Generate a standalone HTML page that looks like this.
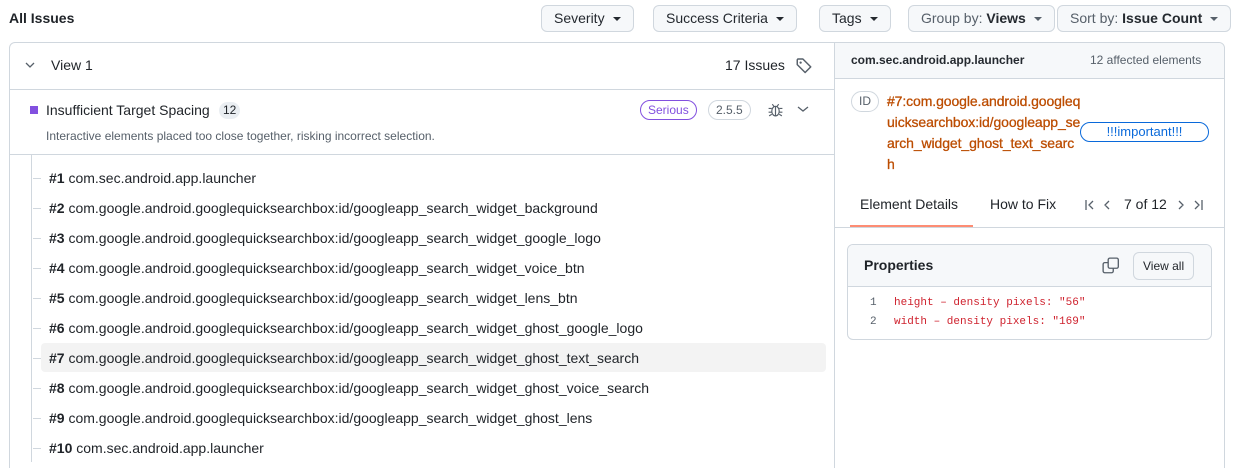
<!DOCTYPE html>
<html style="overflow:hidden;height:468px"><head><style>
*{box-sizing:border-box;margin:0;padding:0}
body{width:1239px;height:468px;overflow:hidden;background:#fff;font-family:"Liberation Sans",sans-serif;color:#1f2328;position:relative;font-size:14px}
.a{position:absolute;white-space:nowrap}
.btn{position:absolute;top:5px;height:27px;border:1px solid #d0d7de;border-radius:6px;background:#f6f8fa;font-size:14px;line-height:25px;padding:0 12px;color:#24292f;white-space:nowrap}
.btn .c{display:inline-block;width:0;height:0;border-left:4px solid transparent;border-right:4px solid transparent;border-top:4px solid #24292f;margin-left:8px;vertical-align:middle}
.row{position:absolute;left:41px;height:30px;width:785px;line-height:30px;padding-left:8px;font-size:14px;color:#1f2328}
.row b{font-weight:bold}
.tick{position:absolute;left:33px;width:8px;height:1px;background:#d0d7de}
</style></head><body>
<div class="a" style="left:9px;top:10px;font-size:14px;font-weight:bold">All Issues</div>
<div class="btn" style="left:541px">Severity<span class="c"></span></div>
<div class="btn" style="left:653px">Success Criteria<span class="c"></span></div>
<div class="btn" style="left:819px">Tags<span class="c"></span></div>
<div class="btn" style="left:908px;color:#57606a">Group by: <b style="color:#24292f">Views</b><span class="c" style="border-top-color:#57606a"></span></div>
<div class="btn" style="left:1057px;color:#57606a">Sort by: <b style="color:#24292f">Issue Count</b><span class="c" style="border-top-color:#57606a"></span></div>

<div class="a" style="left:9px;top:42px;width:1216px;height:440px;border:1px solid #d0d7de;border-radius:6px"></div>
<div class="a" style="left:834px;top:43px;width:1px;height:430px;background:#d0d7de"></div>
<div class="a" style="left:10px;top:89px;width:824px;height:1px;background:#d0d7de"></div>
<div class="a" style="left:10px;top:154px;width:824px;height:1px;background:#d0d7de"></div>

<svg class="a" style="left:25px;top:61px" width="10" height="8"><path d="M1 2l4 4 4-4" fill="none" stroke="#57606a" stroke-width="1.3"/></svg>
<div class="a" style="left:51px;top:57px;font-size:14px">View 1</div>
<div class="a" style="left:725px;top:57px;font-size:14px">17 Issues</div>
<svg class="a" style="left:795px;top:57px" width="18" height="18" viewBox="0 0 16 16"><path d="M2 2.5v4.3l7 7 5-5-7-7H2.5z" fill="none" stroke="#57606a" stroke-width="1.3" stroke-linejoin="round"/><circle cx="5" cy="5" r="1" fill="#57606a"/></svg>

<div class="a" style="left:30px;top:106px;width:8px;height:8px;background:#8250df"></div>
<div class="a" style="left:46px;top:102px;font-size:14px">Insufficient Target Spacing</div>
<div class="a" style="left:219px;top:102px;height:17px;padding:0 4px;border-radius:9px;background:#eaeef2;font-size:12px;line-height:17px">12</div>
<div class="a" style="left:46px;top:129px;font-size:12px;color:#57606a">Interactive elements placed too close together, risking incorrect selection.</div>
<div class="a" style="left:640px;top:100px;height:20px;padding:0 7px;border:1px solid #8250df;border-radius:10px;color:#8250df;font-size:12px;line-height:18px">Serious</div>
<div class="a" style="left:708px;top:100px;height:20px;padding:0 7px;border:1px solid #d0d7de;border-radius:10px;color:#57606a;font-size:12px;line-height:18px">2.5.5</div>
<svg class="a" style="left:767px;top:101px" width="17" height="17" viewBox="0 0 16 16" fill="none" stroke="#57606a" stroke-width="1.1"><ellipse cx="8" cy="9.5" rx="3.5" ry="4.5"/><path d="M8 5v9M5 3l1.5 2M11 3l-1.5 2M1.5 7h3M11.5 7h3M1.5 10.5h3M11.5 10.5h3M2 14l2.5-1.5M14 14l-2.5-1.5"/></svg>
<svg class="a" style="left:797px;top:105px" width="12" height="8"><path d="M1 2l5 4 5-4" fill="none" stroke="#57606a" stroke-width="1.3"/></svg>

<div class="a" style="left:31px;top:155px;width:1px;height:307px;background:#d0d7de"></div>
<div class="row" style="top:343px;background:#f3f3f3;border-radius:4px;height:29px"></div>
<div class="tick" style="top:178px"></div><div class="row" style="top:163px"><b>#1</b> com.sec.android.app.launcher</div>
<div class="tick" style="top:208px"></div><div class="row" style="top:193px"><b>#2</b> com.google.android.googlequicksearchbox:id/googleapp_search_widget_background</div>
<div class="tick" style="top:238px"></div><div class="row" style="top:223px"><b>#3</b> com.google.android.googlequicksearchbox:id/googleapp_search_widget_google_logo</div>
<div class="tick" style="top:268px"></div><div class="row" style="top:253px"><b>#4</b> com.google.android.googlequicksearchbox:id/googleapp_search_widget_voice_btn</div>
<div class="tick" style="top:298px"></div><div class="row" style="top:283px"><b>#5</b> com.google.android.googlequicksearchbox:id/googleapp_search_widget_lens_btn</div>
<div class="tick" style="top:328px"></div><div class="row" style="top:313px"><b>#6</b> com.google.android.googlequicksearchbox:id/googleapp_search_widget_ghost_google_logo</div>
<div class="tick" style="top:358px"></div><div class="row" style="top:343px"><b>#7</b> com.google.android.googlequicksearchbox:id/googleapp_search_widget_ghost_text_search</div>
<div class="tick" style="top:388px"></div><div class="row" style="top:373px"><b>#8</b> com.google.android.googlequicksearchbox:id/googleapp_search_widget_ghost_voice_search</div>
<div class="tick" style="top:418px"></div><div class="row" style="top:403px"><b>#9</b> com.google.android.googlequicksearchbox:id/googleapp_search_widget_ghost_lens</div>
<div class="tick" style="top:448px"></div><div class="row" style="top:433px"><b>#10</b> com.sec.android.app.launcher</div>

<div class="a" style="left:835px;top:43px;width:389px;height:36px;background:#f6f8fa;border-bottom:1px solid #d0d7de;border-top-right-radius:6px"></div>
<div class="a" style="left:851px;top:53px;font-size:12px;font-weight:bold;color:#24292f">com.sec.android.app.launcher</div>
<div class="a" style="left:1090px;top:53px;font-size:12px;color:#57606a">12 affected elements</div>
<div class="a" style="left:851px;top:91px;width:28px;height:21px;border:1px solid #d0d7de;border-radius:11px;font-size:12px;line-height:19px;text-align:center;color:#57606a">ID</div>
<div class="a" style="left:887px;top:91px;font-size:14px;line-height:21px;color:#bc4c00;-webkit-text-stroke:0.3px #bc4c00;letter-spacing:-0.1px">#7:com.google.android.googleq<br>uicksearchbox:id/googleapp_se<br>arch_widget_ghost_text_searc<br>h</div>
<div class="a" style="left:1080px;top:122px;width:129px;height:20px;border:1px solid #0969da;border-radius:10px;color:#0969da;font-size:13px;line-height:18px;text-align:center">!!!important!!!</div>

<div class="a" style="left:860px;top:196px;font-size:14px">Element Details</div>
<div class="a" style="left:850px;top:225px;width:123px;height:2px;background:#fd8c73"></div>
<div class="a" style="left:990px;top:196px;font-size:14px">How to Fix</div>
<svg class="a" style="left:1084px;top:197px" width="120" height="16" viewBox="0 0 120 16" fill="none" stroke="#57606a" stroke-width="1.3"><path d="M2 3v10M9 4l-4 4 4 4M25 4l-4 4 4 4M95 4l4 4-4 4M111 4l4 4-4 4M118 3v10"/></svg>
<div class="a" style="left:1124px;top:196px;font-size:14px">7 of 12</div>
<div class="a" style="left:835px;top:227px;width:389px;height:1px;background:#d0d7de"></div>

<div class="a" style="left:847px;top:244px;width:365px;height:96px;border:1px solid #d0d7de;border-radius:6px;overflow:hidden">
 <div style="height:42px;background:#f6f8fa;border-bottom:1px solid #d0d7de;position:relative">
  <div class="a" style="left:16px;top:12px;font-size:14px;font-weight:bold">Properties</div>
  <svg class="a" style="left:254px;top:12px" width="18" height="18" viewBox="0 0 16 16"><rect x="1" y="5" width="9" height="9" rx="1.5" fill="none" stroke="#57606a" stroke-width="1.2"/><rect x="5.5" y="1" width="9" height="9" rx="1.5" fill="#f6f8fa" stroke="#57606a" stroke-width="1.2"/></svg>
  <div class="a" style="left:285px;top:7px;height:28px;padding:0 9px;border:1px solid #d0d7de;border-radius:6px;background:#f6f8fa;font-size:12px;line-height:26px">View all</div>
 </div>
 <div style="font-family:'Liberation Mono',monospace;font-size:11px;line-height:19px;padding-top:7px">
  <div><span style="color:#57606a;display:inline-block;width:46px;padding-left:22px">1</span><span style="color:#cf222e">height – density pixels: "56"</span></div>
  <div><span style="color:#57606a;display:inline-block;width:46px;padding-left:22px">2</span><span style="color:#cf222e">width – density pixels: "169"</span></div>
 </div>
</div>
</body></html>
